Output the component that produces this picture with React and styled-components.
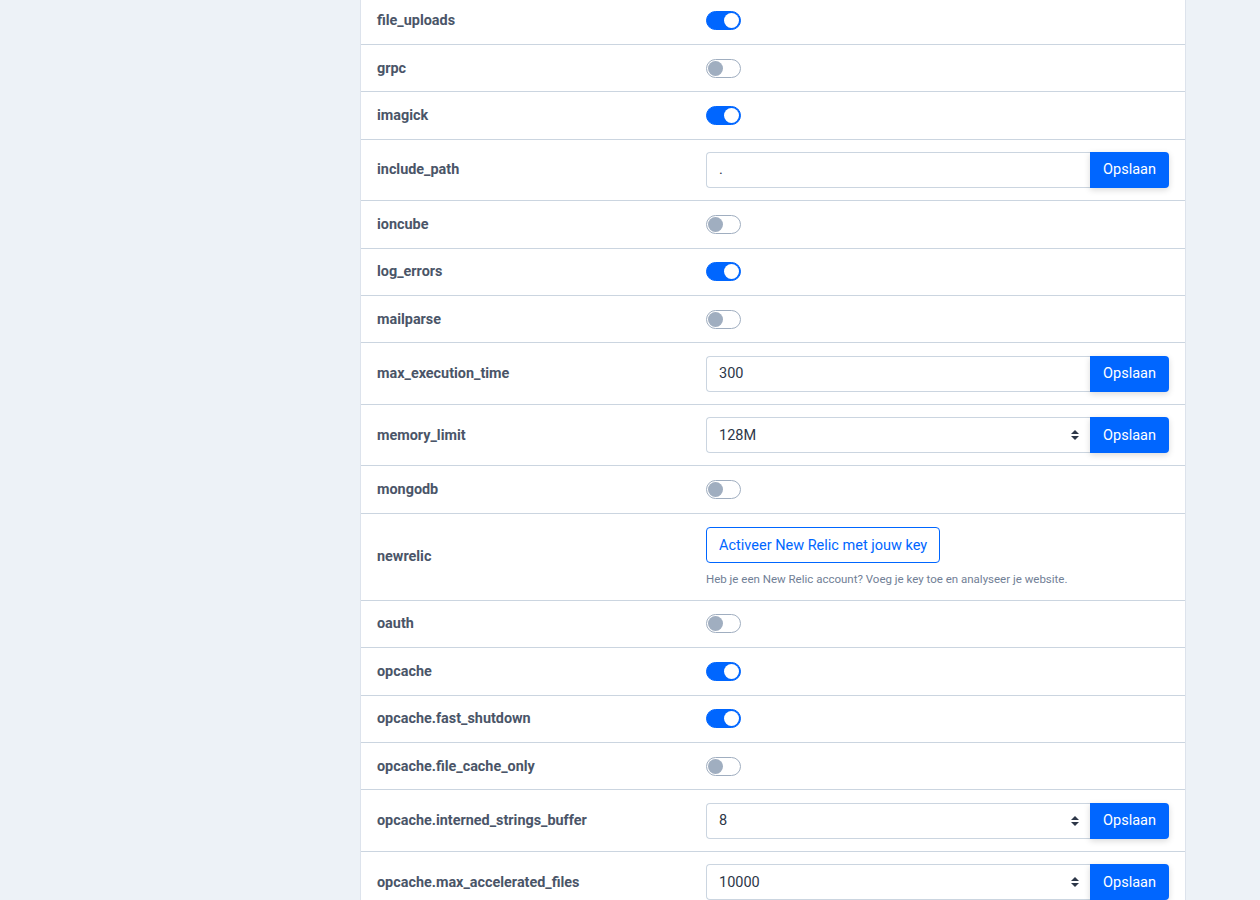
import React from "react"
import styled, { createGlobalStyle } from "styled-components"

const GlobalStyle = createGlobalStyle`
  html, body {
    margin: 0;
    padding: 0;
    background: #edf2f7;
    font-family: Roboto, "Liberation Sans", Arial, sans-serif;
    color: #4a5568;
  }
`

const Page = styled.div`
  display: flex;
  justify-content: flex-start;
  padding-left: 360px;
  margin-top: -2.5px;
  height: 903px;
  overflow: hidden;
`

const Panel = styled.div`
  width: 824px;
  background: #fff;
  border-left: 1px solid #dde3ec;
  border-right: 1px solid #dde3ec;
  flex-shrink: 0;
`

const Row = styled.div`
  display: grid;
  grid-template-columns: 329px 1fr;
  align-items: center;
  padding: 0 16px;
  height: ${(p) => p.$h}px;
  border-bottom: 1px solid #cbd5e0;
  box-sizing: border-box;
`

const Label = styled.div`
  font-size: 14.4px;
  font-weight: 700;
  color: #4a5568;
`

const Control = styled.div`
  display: flex;
  flex-direction: column;
  align-items: flex-start;
`

const Switch = styled.div`
  position: relative;
  width: 35px;
  height: 19px;
  box-sizing: border-box;
  border-radius: 10px;
  border: 1px solid ${(p) => (p.$on ? "#0066ff" : "#a0aec0")};
  background: ${(p) => (p.$on ? "#0066ff" : "#fff")};

  &::after {
    content: "";
    position: absolute;
    top: 1px;
    left: ${(p) => (p.$on ? "17px" : "1px")};
    width: 15px;
    height: 15px;
    border-radius: 50%;
    background: ${(p) => (p.$on ? "#fff" : "#a0aec0")};
  }
`

const InputGroup = styled.div`
  display: flex;
  width: 100%;
  height: 36px;
`

const Field = styled.div`
  flex: 1;
  display: flex;
  align-items: center;
  justify-content: space-between;
  padding: 0 12px;
  border: 1px solid #cbd5e0;
  border-right: none;
  border-radius: 4px 0 0 4px;
  font-size: 14.5px;
  color: #2d3748;
  background: #fff;
`

const Carets = styled.svg`
  width: 8px;
  height: 12px;
  margin-right: -1px;
`

const SaveButton = styled.button`
  width: 79px;
  border: none;
  background: #0066ff;
  color: #fff;
  font-family: inherit;
  font-size: 14.5px;
  border-radius: 0 4px 4px 0;
  box-shadow: 0 2px 6px rgba(0, 0, 0, 0.15);
  padding: 0;
`

const OutlineButton = styled.button`
  height: 36px;
  padding: 0 12px;
  border: 1px solid #0066ff;
  border-radius: 4px;
  background: #fff;
  color: #0066ff;
  font-family: inherit;
  font-size: 14.5px;
`

const Help = styled.div`
  margin-top: 9px;
  font-size: 11.5px;
  color: #718096;
`

const rows = [
  { name: "file_uploads", type: "toggle", on: true },
  { name: "grpc", type: "toggle", on: false },
  { name: "imagick", type: "toggle", on: true },
  { name: "include_path", type: "input", value: "." },
  { name: "ioncube", type: "toggle", on: false },
  { name: "log_errors", type: "toggle", on: true },
  { name: "mailparse", type: "toggle", on: false },
  { name: "max_execution_time", type: "input", value: "300" },
  { name: "memory_limit", type: "select", value: "128M" },
  { name: "mongodb", type: "toggle", on: false },
  { name: "newrelic", type: "newrelic" },
  { name: "oauth", type: "toggle", on: false },
  { name: "opcache", type: "toggle", on: true },
  { name: "opcache.fast_shutdown", type: "toggle", on: true },
  { name: "opcache.file_cache_only", type: "toggle", on: false },
  { name: "opcache.interned_strings_buffer", type: "select", value: "8" },
  { name: "opcache.max_accelerated_files", type: "select", value: "10000" },
]

function heightOf(type) {
  if (type === "toggle") return 47.4
  if (type === "newrelic") return 87
  return 61.5
}

function renderControl(r) {
  if (r.type === "toggle") return <Switch $on={r.on} />
  if (r.type === "newrelic")
    return (
      <>
        <OutlineButton>Activeer New Relic met jouw key</OutlineButton>
        <Help>Heb je een New Relic account? Voeg je key toe en analyseer je website.</Help>
      </>
    )
  return (
    <InputGroup>
      <Field>
        <span>{r.value}</span>
        {r.type === "select" && (
          <Carets viewBox="0 0 8 12">
            <path d="M4 1 L8 5 H0 Z M0 7 H8 L4 11 Z" fill="#2d3748" />
          </Carets>
        )}
      </Field>
      <SaveButton>Opslaan</SaveButton>
    </InputGroup>
  )
}

export default function App() {
  return (
    <>
      <GlobalStyle />
      <Page>
        <Panel>
          {rows.map((r) => (
            <Row key={r.name} $h={heightOf(r.type)}>
              <Label>{r.name}</Label>
              <Control>{renderControl(r)}</Control>
            </Row>
          ))}
        </Panel>
      </Page>
    </>
  )
}
